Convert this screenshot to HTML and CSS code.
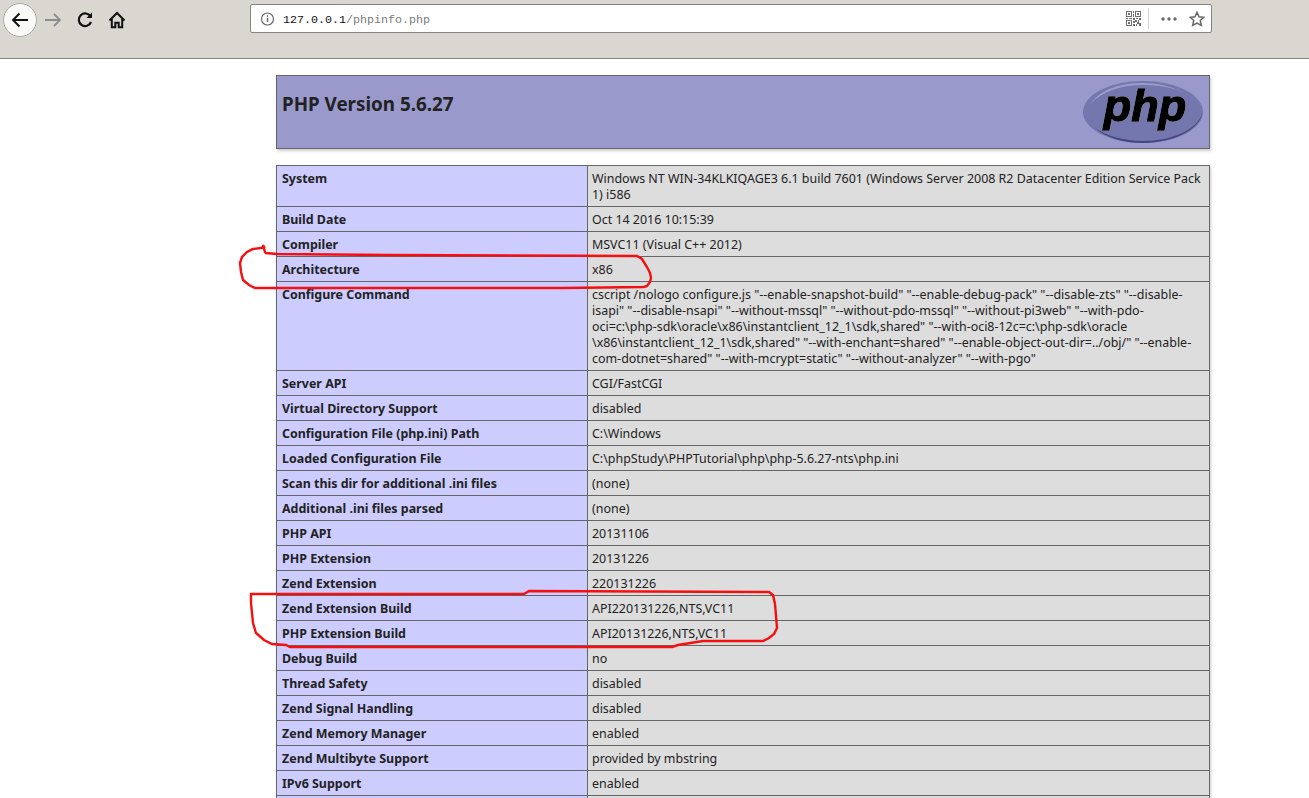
FILE: index.html
```html
<!DOCTYPE html>
<html lang="en">
<head>
    <meta charset="UTF-8">
    <title>phpinfo()</title>
    <link rel="stylesheet" href="styles.css">
</head>
<body>
    <div class="barra">
        <div class="nav">
            <span class="btn-atras">
                <svg width="20" height="20" viewBox="0 0 20 20" fill="none" stroke="#111" stroke-width="1.9"><path d="M18 10H3M9.500 3.500L3 10l6.500 6.500"/></svg>
            </span>
            <svg class="ico-adelante" width="18" height="18" viewBox="0 0 18 18" fill="none" stroke="#8c8c8c" stroke-width="1.8"><path d="M1 9h15M10 3l6 6-6 6"/></svg>
            <svg class="ico-recargar" width="18" height="18" viewBox="0 0 18 18" fill="none" stroke="#111" stroke-width="2.200"><path d="M14.500 5.500A6.300 6.300 0 1 0 15 11"/><path d="M16 1.500v5.500h-5.500z" fill="#111" stroke="none"/></svg>
            <svg class="ico-inicio" width="18" height="18" viewBox="0 0 18 18" fill="none" stroke="#111" stroke-width="2"><path d="M1.500 9.500L9 2l7.500 7.500"/><path d="M3.800 8v8.200h3.500v-4.500h3.400v4.500h3.500V8"/></svg>
        </div>
        <div class="direccion">
            <svg width="16" height="16" viewBox="0 0 16 16" fill="none" stroke="#6a6a6a"><circle cx="7.500" cy="8" r="6" stroke-width="1.200"/><path d="M7.500 7v4" stroke-width="1.500"/><path d="M7.500 4.300v1.500" stroke-width="1.500"/></svg>
            <span class="url"><b>127.0.0.1</b>/phpinfo.php</span>
            <svg class="ico-qr" width="15" height="15" viewBox="0 0 15 15" fill="#6f6f6f"><path d="M0 0h6v6H0zM1 1v4h4V1zM2 2h2v2H2zM9 0h6v6H9zM10 1v4h4V1zM11 2h2v2h-2zM0 9h6v6H0zM1 10v4h4v-4zM2 11h2v2H2zM7 0h1v2H7zM7 3h1v3H7zM0 7h2v1H0zM3 7h3v1H3zM7 7h2v2H7zM10 7h2v1h-2zM13 7h2v2h-2zM9 9h2v2H9zM12 9h1v2h-1zM7 10h2v2H7zM11 11h2v2h-2zM13 12h2v3h-2zM7 13h2v2H7zM10 13h1v2h-1z"/></svg>
            <span class="separador"></span>
            <svg class="ico-puntos" width="16" height="4" viewBox="0 0 16 4" fill="#6a6a6a"><circle cx="2" cy="2" r="1.700"/><circle cx="8" cy="2" r="1.700"/><circle cx="14" cy="2" r="1.700"/></svg>
            <svg class="ico-estrella" width="16" height="16" viewBox="0 0 16 16" fill="none" stroke="#666" stroke-width="1.500"><path d="M8 1.300l2 4.500 4.900.5-3.700 3.200 1.100 4.900L8 12l-4.300 2.400 1.100-4.900L1.100 6.300 6 5.800z"/></svg>
        </div>
    </div>

    <div class="contenido">
        <div class="cabecera">
            <h1>PHP Version 5.6.27</h1>
            <svg class="logo" width="122" height="64" viewBox="0 0 122 64">
                <ellipse cx="61" cy="32" rx="60" ry="31" fill="#7377ad"/>
                <path d="M8 24C20 8 40 3 61 3c28 0 50 12 58 24C108 11 86 5 61 5 38 5 20 12 8 24z" fill="#9a9dc8"/>
                <path d="M120 33c-2 16-28 30-59 30-20 0-38-6-48-15 12 8 29 13 48 13 30 0 55-12 59-28z" fill="#44477f"/>
                <text class="logo-texto" x="63" y="41" text-anchor="middle">php</text>
            </svg>
        </div>

        <table class="datos">
            <tr><td class="e">System</td><td class="v">Windows NT WIN-34KLKIQAGE3 6.1 build 7601 (Windows Server 2008 R2 Datacenter Edition Service Pack 1) i586</td></tr>
            <tr><td class="e">Build Date</td><td class="v">Oct 14 2016 10:15:39</td></tr>
            <tr><td class="e">Compiler</td><td class="v">MSVC11 (Visual C++ 2012)</td></tr>
            <tr><td class="e">Architecture</td><td class="v">x86</td></tr>
            <tr><td class="e">Configure Command</td><td class="v">cscript /nologo configure.js "--enable-snapshot-build" "--enable-debug-pack" "--disable-zts" "--disable-isapi" "--disable-nsapi" "--without-mssql" "--without-pdo-mssql" "--without-pi3web" "--with-pdo-oci=c:\php-sdk\oracle\x86\instantclient_12_1\sdk,shared" "--with-oci8-12c=c:\php-sdk\oracle<br>\x86\instantclient_12_1\sdk,shared" "--with-enchant=shared" "--enable-object-out-dir=../obj/" "--enable-com-dotnet=shared" "--with-mcrypt=static" "--without-analyzer" "--with-pgo"</td></tr>
            <tr><td class="e">Server API</td><td class="v">CGI/FastCGI</td></tr>
            <tr><td class="e">Virtual Directory Support</td><td class="v">disabled</td></tr>
            <tr><td class="e">Configuration File (php.ini) Path</td><td class="v">C:\Windows</td></tr>
            <tr><td class="e">Loaded Configuration File</td><td class="v">C:\phpStudy\PHPTutorial\php\php-5.6.27-nts\php.ini</td></tr>
            <tr><td class="e">Scan this dir for additional .ini files</td><td class="v">(none)</td></tr>
            <tr><td class="e">Additional .ini files parsed</td><td class="v">(none)</td></tr>
            <tr><td class="e">PHP API</td><td class="v">20131106</td></tr>
            <tr><td class="e">PHP Extension</td><td class="v">20131226</td></tr>
            <tr><td class="e">Zend Extension</td><td class="v">220131226</td></tr>
            <tr><td class="e">Zend Extension Build</td><td class="v">API220131226,NTS,VC11</td></tr>
            <tr><td class="e">PHP Extension Build</td><td class="v">API20131226,NTS,VC11</td></tr>
            <tr><td class="e">Debug Build</td><td class="v">no</td></tr>
            <tr><td class="e">Thread Safety</td><td class="v">disabled</td></tr>
            <tr><td class="e">Zend Signal Handling</td><td class="v">disabled</td></tr>
            <tr><td class="e">Zend Memory Manager</td><td class="v">enabled</td></tr>
            <tr><td class="e">Zend Multibyte Support</td><td class="v">provided by mbstring</td></tr>
            <tr><td class="e">IPv6 Support</td><td class="v">enabled</td></tr>
            <tr class="fila-vacia"><td class="e"></td><td class="v"></td></tr>
        </table>
    </div>

    <!-- Red marks drawn by hand over the page -->
    <svg class="marcas" width="1309" height="798" viewBox="0 0 1309 798" fill="none" stroke="#f41010" stroke-width="2.400">
        <path d="M263 245l2 7 1 1 11 1 110 1 250 1 5 3 5 8 3 6 1 5-1 4-3 4-3 1-82 1H255l-6-3-6-5-2-8-1-9 2-6 5-5 6-3 8-1 3-1z"/>
        <path d="M251 594l273 0 5-3 240 1 4 3 2 9 2 24-3 6-5 4-6 3-60 0-25 4-6 2H290l-4-2-14-1-8-4-8-7-3-10-2-20 0-9z"/>
    </svg>
</body>
</html>
```

FILE: styles.css
```css
html {
    overflow: hidden;
}

body {
    margin: 0;
    background: white;
    color: #222;
    font-family: "Noto Sans", sans-serif;
    font-size: 12.45px;
}

/* Browser toolbar */
.barra {
    display: flex;
    align-items: flex-start;
    height: 59px;
    padding: 3px 97px 0 3px;
    box-sizing: border-box;
    background: #d9d7d0;
    border-bottom: 1px solid #85847f;
}

.nav {
    display: flex;
    align-items: center;
    width: 247px;
    height: 33px;
}

.btn-atras {
    display: flex;
    align-items: center;
    justify-content: center;
    width: 32px;
    height: 32px;
    border: 1px solid #aaa9a3;
    border-radius: 50%;
    background: #f9f9f7;
}

.ico-adelante {
    margin-left: 7px;
}

.ico-recargar {
    margin-left: 14px;
}

.ico-inicio {
    margin-left: 14px;
}

.direccion {
    display: flex;
    align-items: center;
    flex: 1;
    height: 27px;
    margin-top: 1px;
    padding: 0 6px 0 9px;
    background: white;
    border: 1px solid #85847f;
    border-radius: 2px;
}

.url {
    flex: 1;
    margin: 2px 0 0 7px;
    font-family: "Liberation Mono", monospace;
    font-size: 11.67px;
    color: #7a7a7a;
}

.url b {
    font-weight: normal;
    color: #111;
}

.separador {
    width: 1px;
    height: 21px;
    margin: 0 12px 0 7px;
    background: #d4d2ca;
}

.ico-estrella {
    margin-left: 12px;
}

/* phpinfo content */
.contenido {
    width: 934px;
    margin: 16px 0 0 276px;
}

.cabecera {
    display: flex;
    justify-content: space-between;
    height: 72px;
    margin-bottom: 16px;
    background: #99c;
    border: 1px solid #666;
    box-shadow: 1px 2px 3px #ccc;
}

.cabecera h1 {
    margin: 16px 0 0 5px;
    font-size: 18.8px;
    line-height: 24px;
    font-weight: bold;
}

.logo {
    margin: 4px 5px 0 0;
}

.logo-texto {
    font-family: "Liberation Sans", sans-serif;
    font-size: 45px;
    font-weight: bold;
    font-style: italic;
    fill: black;
    stroke: black;
    stroke-width: 1.4px;
    filter: drop-shadow(0 0 0.7px white);
}

.datos {
    width: 934px;
    table-layout: fixed;
    border-collapse: collapse;
    box-shadow: 1px 2px 3px #ccc;
}

.datos td {
    padding: 5px 4px 3px 5px;
    border: 1px solid #666;
    line-height: 16px;
    vertical-align: top;
}

.datos .e {
    width: 301px;
    background: #ccf;
    font-weight: bold;
}

.datos .v {
    background: #ddd;
}

.datos .e + .v {
    padding-left: 4px;
}

.fila-vacia td {
    height: 16px;
}

.marcas {
    position: absolute;
    top: 0;
    left: 0;
    pointer-events: none;
}
```
